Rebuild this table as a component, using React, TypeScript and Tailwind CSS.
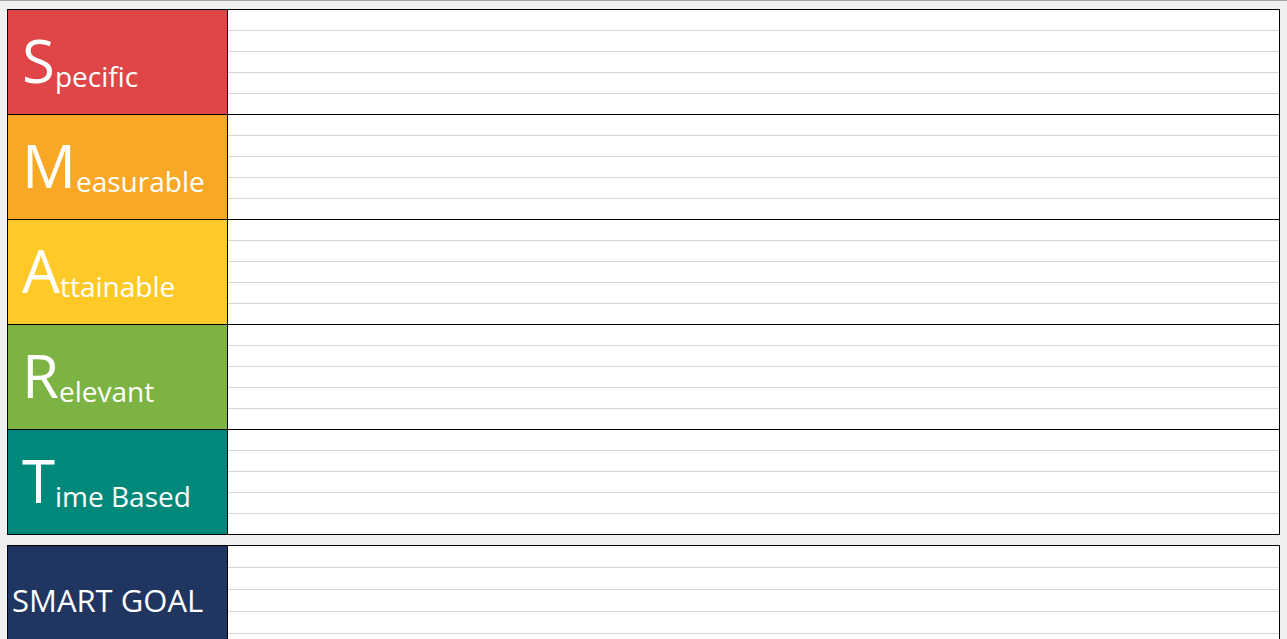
import React from "react"

const ROWS = [
  { letter: "S", rest: "pecific", bg: "bg-[#e04547]", pb: "pb-[24px]" },
  { letter: "M", rest: "easurable", bg: "bg-[#f9a825]", pb: "pb-[24px]" },
  { letter: "A", rest: "ttainable", bg: "bg-[#ffca28]", pb: "pb-[24px]" },
  { letter: "R", rest: "elevant", bg: "bg-[#7cb342]", pb: "pb-[24px]" },
  { letter: "T", rest: "ime Based", bg: "bg-[#00897b]", pb: "pb-[24px]" },
]

function Lines({ count, h }: { count: number; h: string }) {
  return (
    <div className="flex flex-col bg-white">
      {Array.from({ length: count }, (_, i) => (
        <div key={i} className={`${h} border-b border-[#d4d4d4] last:border-b-0`}></div>
      ))}
    </div>
  )
}

export default function App() {
  return (
    <div
      className="min-h-screen bg-[#f0f0f0] border-t border-[#a0a0a0] pt-[8px] pb-4"
      style={{ fontFamily: '"Open Sans", "Noto Sans", sans-serif' }}
    >
      {/* SMART table */}
      <div className="mx-[7px] border border-black flex flex-col divide-y divide-black">
        {ROWS.map((row) => (
          <div key={row.letter} className="grid grid-cols-[220px_1fr]">
            <div className={`${row.bg} ${row.pb} border-r border-black flex items-end pl-[14px] text-white`}>
              <span className="text-[60px] leading-none">{row.letter}</span>
              <span className="text-[28px] leading-none">{row.rest}</span>
            </div>
            <div className="flex flex-col bg-white">
              {Array.from({ length: 5 }, (_, i) => (
                <div key={i} className="h-[21px] border-b border-[#d4d4d4] last:border-b-0 last:h-[20px]"></div>
              ))}
            </div>
          </div>
        ))}
      </div>

      {/* Goal */}
      <div className="mx-[7px] mt-[10px] border border-black grid grid-cols-[220px_1fr]">
        <div className="bg-[#213561] border-r border-black pl-[4px] pt-[39px] text-white">
          <span className="block text-[31px] leading-none">SMART GOAL</span>
        </div>
        <Lines count={5} h="h-[22px]" />
      </div>
    </div>
  )
}
